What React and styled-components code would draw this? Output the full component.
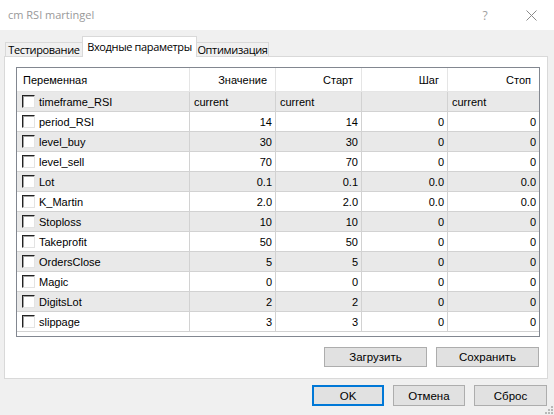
import React from 'react';
import styled, { createGlobalStyle } from 'styled-components';

const GlobalStyle = createGlobalStyle`
  html, body {
    margin: 0;
    padding: 0;
    background: #f0f0f0;
  }
  * { box-sizing: border-box; }
`;

const params = [
  { name: 'timeframe_RSI', value: 'current', start: 'current', step: '', stop: 'current', text: true },
  { name: 'period_RSI', value: '14', start: '14', step: '0', stop: '0' },
  { name: 'level_buy', value: '30', start: '30', step: '0', stop: '0' },
  { name: 'level_sell', value: '70', start: '70', step: '0', stop: '0' },
  { name: 'Lot', value: '0.1', start: '0.1', step: '0.0', stop: '0.0' },
  { name: 'K_Martin', value: '2.0', start: '2.0', step: '0.0', stop: '0.0' },
  { name: 'Stoploss', value: '10', start: '10', step: '0', stop: '0' },
  { name: 'Takeprofit', value: '50', start: '50', step: '0', stop: '0' },
  { name: 'OrdersClose', value: '5', start: '5', step: '0', stop: '0' },
  { name: 'Magic', value: '0', start: '0', step: '0', stop: '0' },
  { name: 'DigitsLot', value: '2', start: '2', step: '0', stop: '0' },
  { name: 'slippage', value: '3', start: '3', step: '0', stop: '0' },
];

const COLS = '173px 86px 86px 86px 91px';

const Window = styled.div`
  width: 554px;
  height: 415px;
  background: #f0f0f0;
  display: flex;
  flex-direction: column;
  position: relative;
  overflow: hidden;
  font-family: "Liberation Sans", Arial, sans-serif;
`;

const TitleBar = styled.div`
  height: 30px;
  background: #fff;
  display: flex;
  align-items: center;
  padding-left: 8px;
  flex-shrink: 0;
`;

const Title = styled.div`
  flex: 1;
  font-family: "Open Sans", "Noto Sans", sans-serif;
  font-size: 11px;
  color: #999;
  padding-bottom: 2px;
`;

const TitleButton = styled.div`
  width: ${p => p.w}px;
  height: 30px;
  display: flex;
  align-items: center;
  justify-content: center;
  color: #a0a0a0;
  font-family: "Open Sans", sans-serif;
  font-size: 12px;
`;

const Body = styled.div`
  flex: 1;
  display: flex;
  flex-direction: column;
  padding: 7px 6px 0 4px;
`;

const TabStrip = styled.div`
  display: flex;
  align-items: flex-end;
  height: 20px;
  padding-left: 1px;
  position: relative;
  z-index: 1;
  margin-bottom: -1px;
`;

const Tab = styled.div`
  width: ${p => p.w}px;
  height: ${p => (p.active ? 21 : 15)}px;
  margin: 0 ${p => (p.active ? -1 : 0)}px;
  display: flex;
  justify-content: center;
  align-items: ${p => (p.active ? 'flex-start' : 'center')};
  padding-top: ${p => (p.active ? 2 : 0)}px;
  background: ${p => (p.active ? '#fff' : '#f0f0f0')};
  border: 1px solid #d9d9d9;
  border-bottom: ${p => (p.active ? 'none' : '1px solid #d9d9d9')};
  font-family: "Open Sans", "Noto Sans", sans-serif;
  font-size: 11px;
  letter-spacing: -0.35px;
  white-space: nowrap;
  color: #000;
  position: relative;
  z-index: ${p => (p.active ? 2 : 1)};
`;

const Panel = styled.div`
  height: 323px;
  background: #fff;
  border: 1px solid #d9d9d9;
  display: flex;
  flex-direction: column;
  padding: 10px 7px 0 11px;
`;

const Grid = styled.div`
  width: 524px;
  height: 270px;
  border: 1px solid #828790;
  background: #fff;
  display: flex;
  flex-direction: column;
`;

const Row = styled.div`
  display: grid;
  grid-template-columns: ${COLS};
  height: ${p => (p.header ? 24 : 20)}px;
  background: ${p => (p.alt ? '#e9e9e9' : '#fff')};
  border-bottom: 1px solid ${p => (p.header ? '#e5e5e5' : '#d2d2d2')};
  flex-shrink: 0;
`;

const Cell = styled.div`
  display: flex;
  align-items: center;
  justify-content: ${p => (p.right ? 'flex-end' : 'flex-start')};
  padding: ${p => (p.header ? '0 8px 0 6px' : '0 3px 0 4px')};
  border-right: 1px solid ${p => (p.header ? '#e5e5e5' : '#d2d2d2')};
  font-size: 11px;
  color: #000;
  white-space: nowrap;
  overflow: hidden;
  &:last-child {
    border-right: none;
  }
`;

const Check = styled.span`
  width: 13px;
  height: 13px;
  flex-shrink: 0;
  background: #fff;
  border-top: 1px solid #222;
  border-left: 1px solid #222;
  border-right: 1px solid #e3e3e3;
  border-bottom: 1px solid #e3e3e3;
  box-shadow: inset 1px 1px 0 #a0a0a0;
  margin: 0 4px 0 1px;
`;

const PanelButtons = styled.div`
  display: flex;
  justify-content: flex-end;
  gap: 9px;
  margin-top: 10px;
  padding-right: 1px;
`;

const Button = styled.button`
  width: ${p => p.w}px;
  height: ${p => p.h}px;
  background: #e1e1e1;
  border: ${p => (p.primary ? '2px solid #0078d7' : '1px solid #adadad')};
  font-family: "Liberation Sans", Arial, sans-serif;
  font-size: 11.5px;
  color: #000;
  padding: 0;
  display: flex;
  align-items: center;
  justify-content: center;
`;

const Footer = styled.div`
  display: flex;
  justify-content: flex-end;
  gap: 9px;
  margin-top: 6px;
  margin-right: 1px;
`;

const Grip = styled.svg`
  position: absolute;
  right: 1px;
  bottom: 1px;
`;

function CheckCell({ name }) {
  return (
    <Cell>
      <Check />
      {name}
    </Cell>
  );
}

export default function App() {
  return (
    <>
      <GlobalStyle />
      <Window>
        <TitleBar>
          <Title>cm RSI martingel</Title>
          <TitleButton w={46}>?</TitleButton>
          <TitleButton w={46}>
            <svg width="11" height="11" viewBox="0 0 11 11">
              <path d="M0.5 0.5 L10.5 10.5 M10.5 0.5 L0.5 10.5" stroke="#8a8a8a" strokeWidth="1" />
            </svg>
          </TitleButton>
        </TitleBar>
        <Body>
          <TabStrip>
            <Tab w={78}>Тестирование</Tab>
            <Tab active w={115}>Входные параметры</Tab>
            <Tab w={73}>Оптимизация</Tab>
          </TabStrip>
          <Panel>
            <Grid>
              <Row header>
                <Cell header>Переменная</Cell>
                <Cell header right>Значение</Cell>
                <Cell header right>Старт</Cell>
                <Cell header right>Шаг</Cell>
                <Cell header right>Стоп</Cell>
              </Row>
              {params.map((p, i) => (
                <Row key={p.name} alt={i % 2 === 0}>
                  <CheckCell name={p.name} />
                  <Cell right={!p.text}>{p.value}</Cell>
                  <Cell right={!p.text}>{p.start}</Cell>
                  <Cell right={!p.text}>{p.step}</Cell>
                  <Cell right={!p.text}>{p.stop}</Cell>
                </Row>
              ))}
            </Grid>
            <PanelButtons>
              <Button w={103} h={20}>Загрузить</Button>
              <Button w={103} h={20}>Сохранить</Button>
            </PanelButtons>
          </Panel>
          <Footer>
            <Button primary w={72} h={21}>OK</Button>
            <Button w={72} h={21}>Отмена</Button>
            <Button w={73} h={21}>Сброс</Button>
          </Footer>
        </Body>
        <Grip width="8" height="8" viewBox="0 0 8 8">
          {[[6, 0], [6, 3], [3, 3], [6, 6], [3, 6], [0, 6]].map(([x, y]) => (
            <rect key={`${x}-${y}`} x={x} y={y} width="2" height="2" fill="#b8b8b8" />
          ))}
        </Grip>
      </Window>
    </>
  );
}
